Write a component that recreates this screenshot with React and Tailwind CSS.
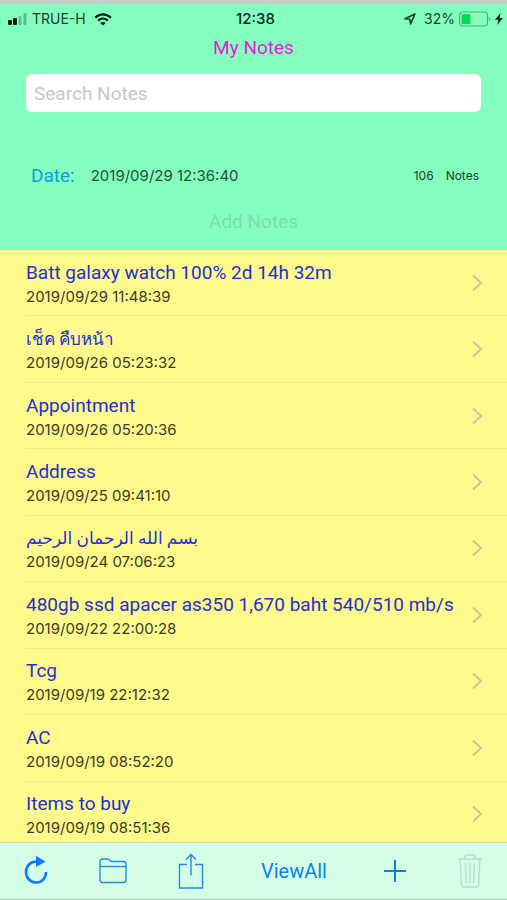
import { useState } from 'react';

const notes = [
  { id: 1, title: 'Batt galaxy watch 100% 2d 14h 32m', date: '2019/09/29 11:48:39' },
  { id: 2, title: 'เช็ค คืบหน้า', lang: 'th', date: '2019/09/26 05:23:32' },
  { id: 3, title: 'Appointment', date: '2019/09/26 05:20:36' },
  { id: 4, title: 'Address', date: '2019/09/25 09:41:10' },
  { id: 5, title: 'بسم الله الرحمان الرحيم', lang: 'ar', date: '2019/09/24 07:06:23' },
  { id: 6, title: '480gb ssd apacer as350 1,670 baht 540/510 mb/s', date: '2019/09/22 22:00:28' },
  { id: 7, title: 'Tcg', date: '2019/09/19 22:12:32' },
  { id: 8, title: 'AC', date: '2019/09/19 08:52:20' },
  { id: 9, title: 'Items to buy', date: '2019/09/19 08:51:36' },
];

const StatusBar = () => (
  <div className="grid grid-cols-3 items-center h-[30px] pl-2 pr-1 font-['Inter',sans-serif] text-sm text-[#17402c]">
    <div className="flex items-center gap-1">
      <svg width="20" height="12" viewBox="0 0 20 12">
        <rect x="0" y="7" width="4" height="5" rx="1" fill="#0b1f14" />
        <rect x="5" y="5" width="4" height="7" rx="1" fill="#0b1f14" />
        <rect x="10.5" y="3" width="3" height="9" rx="1" fill="#5bbd8c" />
        <rect x="15.5" y="0" width="3" height="12" rx="1" fill="#5bbd8c" />
      </svg>
      <span className="whitespace-nowrap">TRUE-H</span>
      <svg className="ml-1" width="18" height="13" viewBox="0 0 18 13" fill="none" stroke="#0b1f14">
        <path d="M1.2 4.6C5.7.3 12.3.3 16.8 4.6" strokeWidth="2.2" />
        <path d="M4.2 7.6C7 5 11 5 13.8 7.6" strokeWidth="2.2" />
        <path d="M9 12.6L6.3 9.9C7.8 8.6 10.2 8.6 11.7 9.9Z" fill="#0b1f14" stroke="none" />
      </svg>
    </div>
    <span className="text-center text-[15px] font-medium text-[#10281b]">12:38</span>
    <div className="flex items-center justify-end gap-1">
      <svg className="mr-1" width="12" height="12" viewBox="0 0 12 12" fill="none" stroke="#17402c" strokeWidth="1.6" strokeLinejoin="round">
        <path d="M11 1L1 5.8L5.8 6.2L6.6 11Z" />
      </svg>
      <span>32%</span>
      <svg width="32" height="16" viewBox="0 0 32 16">
        <rect x="0.5" y="1" width="28" height="14" rx="3.5" fill="none" stroke="#4fae80" strokeWidth="1.2" />
        <rect x="2.5" y="3" width="9" height="10" rx="1.5" fill="#05de4f" />
        <path d="M30 6C31.6 6.8 31.6 9.2 30 10Z" fill="#4fae80" />
      </svg>
      <svg width="8" height="12" viewBox="0 0 8 12" fill="#0b1f14">
        <path d="M5.6 0L0 6.8H3.4L2.2 12L8 4.9H4.6Z" />
      </svg>
    </div>
  </div>
);

const NoteRow = ({ note }) => (
  <li className="pl-[26px]">
    <a href={`#note-${note.id}`} className="flex h-full items-center justify-between pr-6 border-b border-[#f2e895]">
      <span className="flex min-w-0 flex-col">
        <span
          dir="ltr"
          lang={note.lang}
          className={`truncate leading-7 text-[#2330d2] ${note.lang ? 'text-[17px] font-medium' : 'text-[19px]'}`}
        >
          {note.title}
        </span>
        <span className="font-['Inter',sans-serif] text-[15px] leading-5 text-[#3b3a26]">{note.date}</span>
      </span>
      <svg className="shrink-0" width="12" height="18" viewBox="0 0 12 18" fill="none" stroke="#cdc1a6" strokeWidth="2">
        <path d="M2 1.5L10 9L2 16.5" />
      </svg>
    </a>
  </li>
);

const Toolbar = () => (
  <nav className="relative flex items-center justify-between h-[58px] px-6 bg-[#d5fee6] border-t border-b border-t-[#c8dfa8] border-b-[#b5cfc0] text-[#1c8fdc]">
    <button type="button" aria-label="Refresh">
      <svg width="24" height="30" viewBox="0 0 24 30" fill="none">
        <path d="M13 5.5C6.5 5.2 2 10 2 16C2 22 6.5 26.5 12.2 26.5C17.8 26.5 22 22.2 22 16" stroke="#087cf5" strokeWidth="2.6" />
        <path d="M12 0L21.5 5.5L12 11Z" fill="#087cf5" />
      </svg>
    </button>
    <button type="button" aria-label="Folders">
      <svg width="28" height="26" viewBox="0 0 28 26" fill="none" stroke="currentColor" strokeWidth="1.4">
        <path d="M1 22V3.5C1 2 2 1 3.5 1H8.5C11 1 10.5 3.5 13 3.5H24.5C26 3.5 27 4.5 27 6V22C27 23.5 26 24.5 24.5 24.5H3.5C2 24.5 1 23.5 1 22Z" />
        <path d="M1 8.5H27" />
      </svg>
    </button>
    <button type="button" aria-label="Share">
      <svg width="26" height="36" viewBox="0 0 26 36" fill="none" stroke="currentColor" strokeWidth="1.4">
        <path d="M9 11.5H1.5V35H24.5V11.5H17" />
        <path d="M13 22.5V1.5M8 6.5L13 1.5L18 6.5" />
      </svg>
    </button>
    <button type="button" className="px-1.5 text-xl text-[#0c82e6]">ViewAll</button>
    <button type="button" aria-label="Add">
      <svg width="22" height="22" viewBox="0 0 22 22" fill="none" stroke="#087fe0" strokeWidth="2">
        <path d="M11 0V22M0 11H22" />
      </svg>
    </button>
    <button type="button" aria-label="Delete" disabled>
      <svg width="26" height="34" viewBox="0 0 26 34" fill="none" stroke="#b9dcc9" strokeWidth="1.4">
        <path d="M1 5H25M8 5V2.5C8 1.5 8.5 1 9.5 1H16.5C17.5 1 18 1.5 18 2.5V5" />
        <path d="M3 5L4.5 31C4.6 32.5 5.5 33 6.5 33H19.5C20.5 33 21.4 32.5 21.5 31L23 5" />
        <path d="M8.5 9L9.5 29M13 9V29M17.5 9L16.5 29" />
      </svg>
    </button>
  </nav>
);

const App = () => {
  const [search, setSearch] = useState('');

  return (
    <div className="flex min-h-screen flex-col bg-[#fefa8c] font-['Roboto','Noto_Sans','DejaVu_Sans',sans-serif]">
      <header className="flex flex-col h-[250px] bg-[#85ffc0] border-t-4 border-[#c9cdc9]">
        <StatusBar />
        <h1 className="text-center text-[19px] leading-7 text-[#e61bd3]">My Notes</h1>
        <div className="px-[26px] pt-3">
          <input
            type="search"
            aria-label="Search Notes"
            placeholder="Search Notes"
            value={search}
            onChange={(e) => setSearch(e.target.value)}
            className="block w-full h-[38px] px-2 rounded-md bg-white text-[19px] text-gray-800 placeholder:text-[#c6c7cb] outline-none"
          />
        </div>
        <div className="flex items-center pt-12 pl-[31px] pr-7">
          <span className="text-[19px] leading-8 text-[#079fdc]">Date:</span>
          <span className="ml-4 font-['Inter',sans-serif] text-[15px] text-[#1f4f38]">2019/09/29 12:36:40</span>
          <span className="ml-auto font-['Inter',sans-serif] text-xs text-[#17402c]">106</span>
          <span className="ml-3 font-['Inter',sans-serif] text-xs text-[#17402c]">Notes</span>
        </div>
        <button type="button" disabled className="mx-auto mt-4 text-[19px] leading-7 text-[#7fdcae]">Add Notes</button>
      </header>
      <main className="flex flex-1 flex-col overflow-hidden">
        <ul className="-mb-1.5 grid flex-1 auto-rows-fr">
          {notes.map((note) => (
            <NoteRow key={note.id} note={note} />
          ))}
        </ul>
      </main>
      <Toolbar />
    </div>
  );
};

export default App;
